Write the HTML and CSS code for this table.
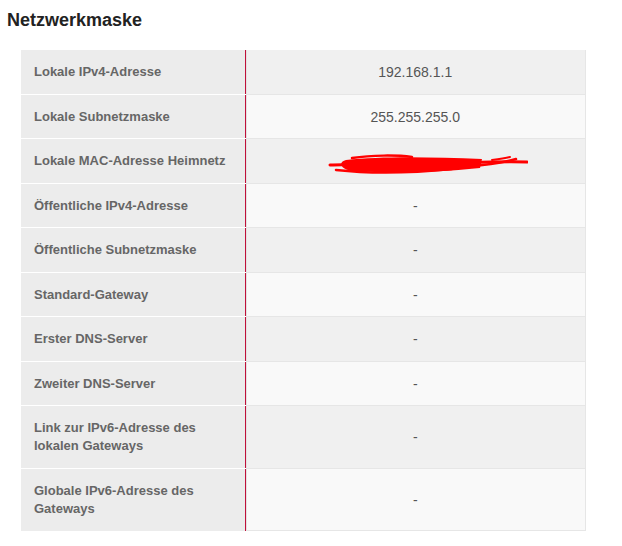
FILE: index.html
```html
<!DOCTYPE html>
<html lang="de">
  <head>
    <meta charset="utf-8" />
    <title>Netzwerkmaske</title>
    <link rel="stylesheet" href="styles.css">
  </head>
  <body>
    <h2 class="title">Netzwerkmaske</h2>
    <table class="net-table">
      <colgroup>
        <col class="col-label" />
        <col class="col-value" />
      </colgroup>
      <tbody>
        <tr>
          <th>Lokale IPv4-Adresse</th>
          <td>192.168.1.1</td>
        </tr>
        <tr>
          <th>Lokale Subnetzmaske</th>
          <td>255.255.255.0</td>
        </tr>
        <tr>
          <th>Lokale MAC-Adresse Heimnetz</th>
          <td>
            <!-- geschwärzt -->
            <svg class="redacted" width="226" height="22" viewBox="0 0 226 22">
              <path d="M44 7 C80 3 130 4 180 6 L178 15 C130 20 90 20 50 18 C38 16 36 9 44 7 Z" fill="#ff0000" />
              <path d="M28 12 C60 11 90 10 120 11" stroke="#ff0000" stroke-width="3" fill="none" stroke-linecap="round" />
              <path d="M34 17 C70 21 110 20 150 16" stroke="#ff0000" stroke-width="2.5" fill="none" stroke-linecap="round" />
              <path d="M160 10 C185 9 205 8 225 9" stroke="#ff0000" stroke-width="3" fill="none" stroke-linecap="round" />
              <path d="M168 13 C190 12 200 10 214 6" stroke="#ff0000" stroke-width="2.5" fill="none" stroke-linecap="round" />
              <path d="M50 5 C70 2 95 2 110 4" stroke="#ff0000" stroke-width="2.5" fill="none" stroke-linecap="round" />
              <path d="M190 7 C198 6 204 5 208 4" stroke="#ff0000" stroke-width="2" fill="none" stroke-linecap="round" />
            </svg>
          </td>
        </tr>
        <tr>
          <th>Öffentliche IPv4-Adresse</th>
          <td>-</td>
        </tr>
        <tr>
          <th>Öffentliche Subnetzmaske</th>
          <td>-</td>
        </tr>
        <tr>
          <th>Standard-Gateway</th>
          <td>-</td>
        </tr>
        <tr>
          <th>Erster DNS-Server</th>
          <td>-</td>
        </tr>
        <tr>
          <th>Zweiter DNS-Server</th>
          <td>-</td>
        </tr>
        <tr>
          <th>Link zur IPv6-Adresse des lokalen Gateways</th>
          <td>-</td>
        </tr>
        <tr>
          <th>Globale IPv6-Adresse des Gateways</th>
          <td>-</td>
        </tr>
      </tbody>
    </table>
  </body>
</html>
```

FILE: styles.css
```css
* {
  box-sizing: border-box;
}
body {
  margin: 0;
  padding: 10px 7px;
  background: #fff;
  font-family: "Liberation Sans", Arial, sans-serif;
}
.title {
  margin: 0 0 19px;
  font-size: 18px;
  line-height: 21px;
  font-weight: bold;
  color: #222;
}
.net-table {
  margin-left: 14px;
  width: 565px;
  table-layout: fixed;
  border-collapse: collapse;
}
.col-label {
  width: 224px;
}
.net-table th {
  padding: 13px 13px 12.5px;
  background: #ececec;
  border-bottom: 1px solid #fff;
  border-right: 1px solid #c0103a;
  text-align: left;
  font-size: 13px;
  line-height: 18px;
  font-weight: bold;
  color: #666;
}
.net-table td {
  padding: 13px 10px 12.5px;
  background: #f0f0f0;
  border-bottom: 1px solid #e6e6e6;
  border-right: 1px solid #e6e6e6;
  box-shadow: inset 1px 0 #e2e2e2;
  text-align: center;
  font-size: 14px;
  line-height: 18px;
  color: #555;
}
.net-table tr:nth-child(even) td {
  background: #f9f9f9;
}
.net-table tr:last-child th {
  border-bottom-color: transparent;
}
.redacted {
  display: block;
  margin: 1px auto -5px;
}
```
